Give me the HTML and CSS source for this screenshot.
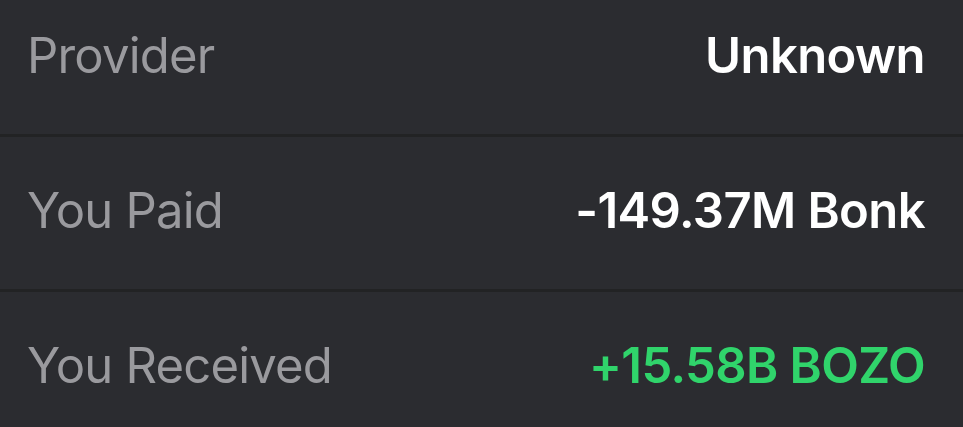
FILE: index.html
```html
<!DOCTYPE html>
<html>
<head>
<meta charset="utf-8">
<link rel="stylesheet" href="styles.css">
</head>
<body>
<div class="list">
  <div class="row">
    <span class="label">Provider</span>
    <span class="value">Unknown</span>
  </div>
  <div class="row">
    <span class="label">You Paid</span>
    <span class="value">-149.37M Bonk</span>
  </div>
  <div class="row">
    <span class="label">You Received</span>
    <span class="value green">+15.58B BOZO</span>
  </div>
</div>
</body>
</html>
```
FILE: styles.css
```css
html, body {
  margin: 0;
  padding: 0;
  background: #2b2c30;
  height: 100%;
  overflow: hidden;
}
.list {
  margin-top: -18px;
  font-family: Inter, "Noto Sans", sans-serif;
}
.row {
  box-sizing: border-box;
  height: 155px;
  display: flex;
  align-items: center;
  justify-content: space-between;
  padding: 0 38px 5px 27px;
  border-bottom: 3px solid #222324;
}
.label {
  font-size: 49px;
  color: #9a9a9e;
  font-weight: 400;
  letter-spacing: -0.8px;
}
.value {
  font-size: 49px;
  color: #ffffff;
  font-weight: 600;
  letter-spacing: -0.6px;
}
.green {
  color: #30d46b;
}
```
